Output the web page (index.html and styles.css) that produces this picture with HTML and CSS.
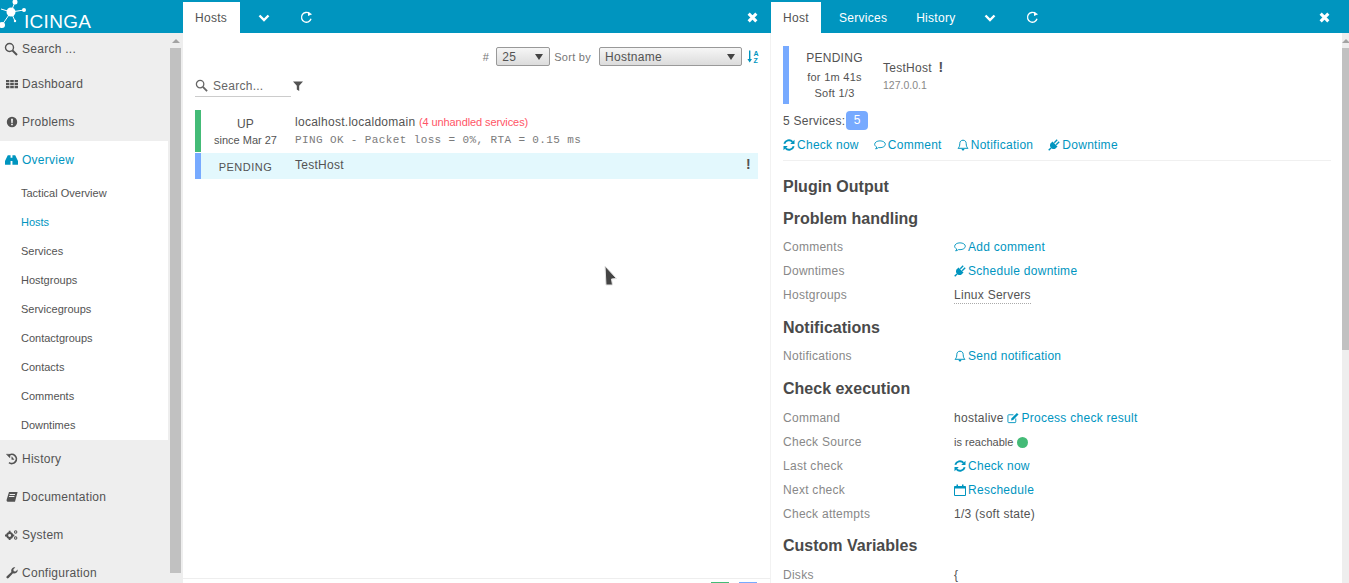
FILE: index.html
```html
<!DOCTYPE html>
<html lang="en">

<head>
    <meta charset="UTF-8">
    <title>Icinga Web</title>
    <link rel="stylesheet" href="styles.css">
</head>

<body>
    <svg class="sprites" width="0" height="0">
        <symbol id="i-search" viewBox="0 0 14 14"><circle cx="5.5" cy="5.5" r="4" fill="none" stroke="currentColor" stroke-width="1.4"/><path d="M8.5 8.5l4.5 4.5" stroke="currentColor" stroke-width="2" fill="none"/></symbol>
        <symbol id="i-grid" viewBox="0 0 12 10"><path d="M0 1h3.4v2.2H0zM4.2 1h3.6v2.2H4.2zM8.6 1H12v2.2H8.6zM0 4h3.4v2.2H0zM4.2 4h3.6v2.2H4.2zM8.6 4H12v2.2H8.6zM0 7h3.4v2.2H0zM4.2 7h3.6v2.2H4.2zM8.6 7H12v2.2H8.6z" fill="currentColor"/></symbol>
        <symbol id="i-alert" viewBox="0 0 12 12"><path fill-rule="evenodd" d="M6 .8a5.2 5.2 0 1 1 0 10.4A5.2 5.2 0 0 1 6 .8zM5 2.8l.3 4.2h1.4L7 2.8zM5.1 7.8v1.5h1.8V7.8z" fill="currentColor"/></symbol>
        <symbol id="i-binoculars" viewBox="0 0 14 12"><path d="M3 .8h3v10.400H.6c-.4 0-.6-.2-.6-.6V7zM11 .8H8v10.400h5.400c.4 0 .6-.2.6-.6V7zM6 3.500h2v3.500H6z" fill="currentColor"/></symbol>
        <symbol id="i-history" viewBox="0 0 12 12"><path d="M2.6 2.6A4.6 4.6 0 1 1 3 9.6" fill="none" stroke="currentColor" stroke-width="1.7"/><path d="M.4 1.2l3.8.2-.4 3.4zM5.800 3.600v2.800h2.400" fill="currentColor" stroke="currentColor" stroke-width=".5"/></symbol>
        <symbol id="i-book" viewBox="0 0 12 12"><path d="M3 1h8.600L9 10.800H1.800C.6 10.800.4 9.600.7 8.600zM3.700 3l-.2.900h5.400l.2-.900zM3.100 5l-.2.900h5.400l.2-.900z" fill="currentColor" fill-rule="evenodd"/></symbol>
        <symbol id="i-cogs" viewBox="0 0 14 12"><circle cx="5" cy="6.500" r="2.700" fill="none" stroke="currentColor" stroke-width="2.200"/><path d="M4 1.500h2v2H4zM4 9.500h2v2H4zM0 5.500h2v2H0zM8 5.500h2v2H8z" fill="currentColor"/><circle cx="11.500" cy="2.800" r="1.300" fill="none" stroke="currentColor" stroke-width="1.100"/><circle cx="11.500" cy="9.300" r="1.300" fill="none" stroke="currentColor" stroke-width="1.100"/></symbol>
        <symbol id="i-wrench" viewBox="0 0 12 12"><path d="M11.600 2.600A3.400 3.400 0 0 1 7 6.300L2.600 11a1.200 1.200 0 0 1-1.800-1.700L5.400 4.900A3.400 3.400 0 0 1 9.300.4L7.400 2.300l.3 1.900 1.900.3z" fill="currentColor"/></symbol>
        <symbol id="i-chevron" viewBox="0 0 12 8"><path d="M1.500 1.500L6 6l4.500-4.500" fill="none" stroke="currentColor" stroke-width="2.400"/></symbol>
        <symbol id="i-reload" viewBox="0 0 12 12"><path d="M10.200 7.200A4.500 4.500 0 1 1 8.800 2.400" fill="none" stroke="currentColor" stroke-width="1.200"/><path d="M7.400.6l3.800 2.400-3.800 1.600z" fill="currentColor"/></symbol>
        <symbol id="i-close" viewBox="0 0 10 10"><path d="M1.500 1.500l7 7M8.500 1.500l-7 7" stroke="currentColor" stroke-width="2.800" fill="none"/></symbol>
        <symbol id="i-filter" viewBox="0 0 10 10"><path d="M0 .5h10L6.200 4.800V10L3.800 8.400V4.800z" fill="currentColor"/></symbol>
        <symbol id="i-refresh" viewBox="0 0 12 12"><path d="M1.300 4.800A4.800 4.800 0 0 1 9.500 2.900M10.700 7.200A4.800 4.800 0 0 1 2.500 9.100" fill="none" stroke="currentColor" stroke-width="1.900"/><path d="M11.500.8v4.300H7.200zM.5 11.200V6.900h4.300z" fill="currentColor"/></symbol>
        <symbol id="i-comment" viewBox="0 0 13 11"><path d="M6.500 1C3.300 1 .7 2.600.7 4.700c0 1.200.9 2.300 2.200 3-.1.800-.6 1.500-1.200 2 1.300-.1 2.400-.7 3.200-1.400.5.100 1 .1 1.600.1 3.200 0 5.800-1.600 5.800-3.700S9.700 1 6.500 1z" fill="none" stroke="currentColor"/></symbol>
        <symbol id="i-bell" viewBox="0 0 12 12"><path d="M6 1.200c-2 0-3.200 1.500-3.200 3.300 0 2.500-.6 3.700-1.800 4.800h10C9.800 8.200 9.200 7 9.200 4.500 9.200 2.700 8 1.200 6 1.200z" fill="none" stroke="currentColor"/><path d="M4.600 10h2.800c0 .8-.6 1.500-1.400 1.500S4.600 10.800 4.600 10z" fill="currentColor"/></symbol>
        <symbol id="i-plug" viewBox="0 0 12 12"><path d="M4.500 2.500l5 5-2 2c-1.500 1-3.500.5-4.500-.5S1.500 6 2.500 4.500z" fill="currentColor"/><path d="M6.300 3.800L9.200.8M8.200 5.700l3-3M3 9l-2.300 2.300" stroke="currentColor" stroke-width="1.400" fill="none"/></symbol>
        <symbol id="i-edit" viewBox="0 0 13 12"><path d="M9.500 6.500v3.700c0 .5-.3.800-.8.800H1.800c-.5 0-.8-.3-.8-.8V3.300c0-.5.300-.8.800-.8h5.200" fill="none" stroke="currentColor"/><path d="M10.700.5l1.800 1.800-5.800 5.800-2.300.5.500-2.300z" fill="currentColor"/></symbol>
        <symbol id="i-calendar" viewBox="0 0 12 12"><path d="M.5 2.500h11v9H.5z" fill="none" stroke="currentColor"/><path d="M.5 2.500h11v2H.5zM2.500.5h1.500v2.500H2.500zM8 .5h1.500v2.500H8z" fill="currentColor"/></symbol>
    </svg>

    <div class="app">
        <aside class="sidebar">
            <div class="logo">
                <svg class="logo-mark" width="30" height="33" viewBox="0 0 30 33">
                    <path d="M11 12L15 2M11 12L24 10M11 12L1 9M11 12L15 21M11 12L2 25" stroke="#fff" stroke-width="1" fill="none"/>
                    <circle cx="11" cy="12" r="4.500" fill="#fff"/>
                    <circle cx="15" cy="2" r="2.500" fill="#fff"/>
                    <circle cx="24" cy="10" r="2" fill="#fff"/>
                    <circle cx="15" cy="21" r="1.200" fill="#fff"/>
                    <circle cx="2" cy="25" r="3" fill="#fff"/>
                </svg>
                <span class="logo-text">ICINGA</span>
            </div>
            <div class="side-body">
                <nav class="side-nav">
                    <div class="nav-search"><svg class="nav-icon"><use href="#i-search"/></svg>Search ...</div>
                    <a class="nav-item"><svg class="nav-icon small"><use href="#i-grid"/></svg>Dashboard</a>
                    <a class="nav-item"><svg class="nav-icon small"><use href="#i-alert"/></svg>Problems</a>
                    <div class="nav-active">
                        <a class="nav-item current"><svg class="nav-icon"><use href="#i-binoculars"/></svg>Overview</a>
                        <a class="sub-item">Tactical Overview</a>
                        <a class="sub-item current">Hosts</a>
                        <a class="sub-item">Services</a>
                        <a class="sub-item">Hostgroups</a>
                        <a class="sub-item">Servicegroups</a>
                        <a class="sub-item">Contactgroups</a>
                        <a class="sub-item">Contacts</a>
                        <a class="sub-item">Comments</a>
                        <a class="sub-item">Downtimes</a>
                    </div>
                    <a class="nav-item"><svg class="nav-icon small"><use href="#i-history"/></svg>History</a>
                    <a class="nav-item"><svg class="nav-icon small"><use href="#i-book"/></svg>Documentation</a>
                    <a class="nav-item"><svg class="nav-icon"><use href="#i-cogs"/></svg>System</a>
                    <a class="nav-item"><svg class="nav-icon small"><use href="#i-wrench"/></svg>Configuration</a>
                </nav>
                <div class="scrollbar side-scroll">
                    <div class="arrow-up"></div>
                    <div class="thumb"></div>
                </div>
            </div>
        </aside>

        <section class="col col-left">
            <div class="tabs">
                <a class="tab active">Hosts</a>
                <a class="tab tab-icon"><svg class="icon chevron"><use href="#i-chevron"/></svg></a>
                <a class="tab tab-icon"><svg class="icon reload"><use href="#i-reload"/></svg></a>
                <svg class="icon close"><use href="#i-close"/></svg>
            </div>
            <div class="list-content">
                <div class="list-controls">
                    <span class="ctl-label">#</span>
                    <div class="fake-select limit-select">25</div>
                    <span class="ctl-label">Sort by</span>
                    <div class="fake-select sort-select">Hostname</div>
                    <svg class="sort-icon" viewBox="0 0 12 14">
                        <path d="M2 1h1.400v8.500H5L2.700 13 .4 9.500H2z" fill="currentColor"/>
                        <text x="6.500" y="6" class="sort-letter">A</text>
                        <text x="6.500" y="13" class="sort-letter">Z</text>
                    </svg>
                </div>
                <div class="filter-row">
                    <div class="list-search"><svg class="icon search-icon"><use href="#i-search"/></svg>Search...</div>
                    <svg class="icon filter-icon"><use href="#i-filter"/></svg>
                </div>
                <div class="host-row">
                    <div class="state state-up">
                        <span class="state-name">UP</span>
                        <span class="state-since">since Mar 27</span>
                    </div>
                    <div class="host-info">
                        <div>localhost.localdomain <span class="unhandled">(4 unhandled services)</span></div>
                        <div class="plugin-text">PING OK - Packet loss = 0%, RTA = 0.15 ms</div>
                    </div>
                </div>
                <div class="host-row selected">
                    <div class="state state-pending">
                        <span class="state-name">PENDING</span>
                    </div>
                    <div class="host-info">TestHost</div>
                    <span class="bang">!</span>
                </div>
            </div>
            <div class="list-footer">
                <span class="foot-pill green"></span>
                <span class="foot-pill blue"></span>
            </div>
        </section>

        <section class="col col-right">
            <div class="tabs">
                <a class="tab active">Host</a>
                <a class="tab tab-services">Services</a>
                <a class="tab tab-history">History</a>
                <a class="tab tab-icon"><svg class="icon chevron"><use href="#i-chevron"/></svg></a>
                <a class="tab tab-icon"><svg class="icon reload"><use href="#i-reload"/></svg></a>
                <svg class="icon close"><use href="#i-close"/></svg>
            </div>
            <div class="detail-body">
                <div class="detail">
                    <div class="host-head">
                        <div class="head-state">
                            <div class="head-name">PENDING</div>
                            <div>for 1m 41s</div>
                            <div>Soft 1/3</div>
                        </div>
                        <div class="head-info">
                            <div class="head-host">TestHost <span class="bang">!</span></div>
                            <div class="head-ip">127.0.0.1</div>
                        </div>
                    </div>
                    <div class="services-line">5 Services: <span class="badge">5</span></div>
                    <div class="actions">
                        <a><svg class="icon link-icon"><use href="#i-refresh"/></svg>Check now</a>
                        <a><svg class="icon link-icon"><use href="#i-comment"/></svg>Comment</a>
                        <a><svg class="icon link-icon"><use href="#i-bell"/></svg>Notification</a>
                        <a><svg class="icon link-icon"><use href="#i-plug"/></svg>Downtime</a>
                    </div>

                    <h2 class="first">Plugin Output</h2>
                    <h2>Problem handling</h2>
                    <div class="kv"><span>Comments</span><a><svg class="icon link-icon"><use href="#i-comment"/></svg>Add comment</a></div>
                    <div class="kv"><span>Downtimes</span><a><svg class="icon link-icon"><use href="#i-plug"/></svg>Schedule downtime</a></div>
                    <div class="kv"><span>Hostgroups</span><div><span class="dotted">Linux Servers</span></div></div>

                    <h2>Notifications</h2>
                    <div class="kv"><span>Notifications</span><a><svg class="icon link-icon"><use href="#i-bell"/></svg>Send notification</a></div>

                    <h2 class="wide-bottom">Check execution</h2>
                    <div class="kv"><span>Command</span><div>hostalive <a><svg class="icon link-icon"><use href="#i-edit"/></svg>Process check result</a></div></div>
                    <div class="kv"><span>Check Source</span><div class="reachable">is reachable <i class="dot"></i></div></div>
                    <div class="kv"><span>Last check</span><a><svg class="icon link-icon"><use href="#i-refresh"/></svg>Check now</a></div>
                    <div class="kv"><span>Next check</span><a><svg class="icon link-icon"><use href="#i-calendar"/></svg>Reschedule</a></div>
                    <div class="kv"><span>Check attempts</span><div>1/3 (soft state)</div></div>

                    <h2 class="wide-bottom close-top">Custom Variables</h2>
                    <div class="kv"><span>Disks</span><div>{</div></div>
                </div>
                <div class="scrollbar main-scroll">
                    <div class="arrow-up"></div>
                    <div class="thumb"></div>
                </div>
            </div>
        </section>
    </div>

    <svg class="cursor" width="16" height="24" viewBox="0 0 16 24">
        <path d="M2 2l11.500 12.500-5 .5 1 6H3z" fill="#444" stroke="#e4e4e4" stroke-width="1"/>
    </svg>
</body>

</html>
```

FILE: styles.css
```css
* {
    box-sizing: border-box;
}

html,
body {
    margin: 0;
    padding: 0;
    height: 100%;
    overflow: hidden;
}

body {
    font-family: "Liberation Sans", Arial, sans-serif;
    font-size: 12px;
    letter-spacing: 0.27px;
    color: #535353;
    background-color: #fff;
    position: relative;
}

.sprites {
    position: absolute;
}

.app {
    display: flex;
    height: 583px;
}

.icon {
    width: 12px;
    height: 12px;
    flex: none;
}

/* sidebar */
.sidebar {
    width: 183px;
    flex: none;
    display: flex;
    flex-direction: column;
    background-color: #eee;
}

.logo {
    height: 33px;
    flex: none;
    background-color: #0095bf;
    display: flex;
}

.logo-text {
    color: #fff;
    font-size: 19px;
    line-height: 21px;
    margin-top: 11px;
    margin-left: -6px;
    letter-spacing: 0.3px;
}

.side-body {
    flex: 1;
    display: flex;
    min-height: 0;
}

.side-nav {
    width: 168px;
    flex: none;
}

.nav-search,
.nav-item {
    display: flex;
    align-items: center;
    color: #535353;
}

.nav-search {
    height: 32px;
    padding-left: 4px;
}

.nav-item {
    height: 38px;
    padding-left: 5px;
}

.nav-icon {
    width: 14px;
    height: 14px;
    margin-right: 4px;
    flex: none;
}

.nav-item .nav-icon {
    width: 13px;
    margin-right: 4px;
}

.nav-icon.small,
.nav-item .nav-icon.small {
    width: 12px;
    height: 12px;
    margin-left: 1px;
    margin-right: 4px;
}

.nav-active {
    background-color: #fff;
}

.sub-item {
    display: flex;
    align-items: center;
    height: 29px;
    padding: 0 0 2px 21px;
    font-size: 11px;
    letter-spacing: 0;
    color: #535353;
}

.nav-item.current,
.sub-item.current {
    color: #0095bf;
}

.scrollbar {
    display: flex;
    flex-direction: column;
}

.side-scroll {
    width: 15px;
    padding: 0 2px;
    background-color: #eee;
}

.arrow-up {
    height: 15px;
    flex: none;
    display: flex;
    justify-content: center;
    align-items: center;
}

.arrow-up::before {
    content: "";
    border-left: 4px solid transparent;
    border-right: 4px solid transparent;
    border-bottom: 4px solid #a3a3a3;
}

.thumb {
    background-color: #c1c1c1;
}

.side-scroll .thumb {
    height: 525px;
    width: 11px;
}

/* columns */
.col {
    display: flex;
    flex-direction: column;
    min-width: 0;
}

.col-left {
    width: 588px;
    flex: none;
}

.col-right {
    flex: 1;
}

.tabs {
    height: 33px;
    flex: none;
    background-color: #0095bf;
    display: flex;
    align-items: flex-end;
    padding-top: 2px;
    color: #fff;
}

.tab {
    height: 31px;
    padding: 0 12px;
    display: flex;
    align-items: center;
    color: #fff;
}

.tab.active {
    background-color: #fff;
    color: #535353;
}

.col-left .tab.active {
    width: 57px;
}

.col-right .tab {
    padding: 0 15px;
}

.col-right .tab-services {
    margin-left: 3px;
}

.col-right .tab-history {
    margin-left: -1px;
}

.col-right .tab.active {
    padding: 0 12px;
    width: 50px;
}

.tab-icon {
    width: 38px;
    justify-content: center;
}

.col-left .tab.tab-icon {
    padding: 0;
    width: 36px;
    margin-right: 6px;
}

.col-left .tab-icon:nth-child(2) {
    margin-left: 6px;
}

.col-right .tab.tab-icon {
    padding: 0;
    margin-right: 4px;
}

.col-right .tab-history + .tab-icon {
    margin-left: 1px;
}

.chevron {
    width: 12px;
    height: 8px;
}

.reload {
    width: 13px;
    height: 13px;
}

.close {
    margin-left: auto;
    margin-right: 13px;
    margin-bottom: 10px;
    width: 11px;
    height: 11px;
}

.col-right .close {
    margin-right: 19px;
}

/* host list */
.list-content {
    flex: 1;
    padding: 0 12px;
    border-right: 1px solid #f2f2f2;
}

.list-controls {
    display: flex;
    justify-content: flex-end;
    align-items: center;
    height: 19px;
    margin: 14px -1px 0 0;
}

.ctl-label {
    font-size: 11px;
    color: #777;
}

.fake-select {
    height: 19px;
    border: 1px solid #999;
    border-radius: 2px;
    background: linear-gradient(#f6f6f6, #dcdcdc);
    padding-left: 5px;
    line-height: 18px;
    position: relative;
}

.fake-select::after {
    content: "";
    position: absolute;
    right: 6px;
    top: 6px;
    border-left: 4px solid transparent;
    border-right: 4px solid transparent;
    border-top: 6px solid #444;
}

.limit-select {
    width: 54px;
    margin: 0 4px 0 7px;
}

.sort-select {
    width: 143px;
    margin-left: 8px;
}

.sort-icon {
    width: 12px;
    height: 15px;
    margin-left: 5px;
    color: #0095bf;
}

.sort-letter {
    font: bold 7px "Liberation Sans", sans-serif;
    letter-spacing: 0;
    fill: currentColor;
}

.filter-row {
    display: flex;
    align-items: center;
    margin-top: 8px;
}

.list-search {
    width: 96px;
    height: 23px;
    padding-top: 1px;
    border-bottom: 1px solid #ccc;
    display: flex;
    align-items: center;
    gap: 5px;
    color: #666;
}

.search-icon {
    width: 13px;
    height: 13px;
}

.filter-icon {
    margin-left: 2px;
    width: 10px;
    height: 10px;
}

.host-row {
    display: flex;
    align-items: flex-start;
    margin-top: 13px;
    height: 42px;
    position: relative;
}

.host-row.selected {
    margin-top: 1px;
    height: 26px;
    background-color: #e3f8fd;
}

.state {
    width: 88px;
    flex: none;
    height: 100%;
    border-left: 6px solid #44bb77;
    padding: 7px 0 0 7px;
    display: flex;
    flex-direction: column;
    align-items: center;
}

.state-pending {
    border-left-color: #77aaff;
}

.state-name {
    line-height: 14px;
}

.state-pending .state-name {
    font-size: 11px;
    letter-spacing: 0.5px;
}

.state-since {
    font-size: 11px;
    letter-spacing: 0;
    line-height: 18px;
}

.host-info {
    margin-left: 12px;
    padding-top: 5px;
    white-space: nowrap;
}

.unhandled {
    color: #ff5566;
    font-size: 11px;
    letter-spacing: -0.1px;
}

.plugin-text {
    font-family: "Liberation Mono", monospace;
    font-size: 11px;
    letter-spacing: 0.38px;
    color: #7b7b7b;
    margin-top: 5px;
}

.bang {
    font-size: 14px;
    font-weight: bold;
    color: #535353;
}

.head-host .bang {
    margin-left: 3px;
}

.host-row .bang {
    position: absolute;
    right: 7px;
    top: 3px;
}

.list-footer {
    height: 5px;
    flex: none;
    border-top: 1px solid #eee;
    border-right: 1px solid #f2f2f2;
    display: flex;
    justify-content: flex-end;
    gap: 10px;
    padding: 3px 13px 0 0;
}

.foot-pill {
    width: 18px;
    height: 1px;
    display: block;
}

.foot-pill.green {
    background-color: #44bb77;
}

.foot-pill.blue {
    background-color: #77aaff;
}

/* host detail */
.detail-body {
    flex: 1;
    display: flex;
    min-height: 0;
}

.detail {
    flex: 1;
    padding: 13px 11px 0 12px;
    overflow: hidden;
    min-width: 0;
}

.main-scroll {
    width: 7px;
    flex: none;
    background-color: #eee;
}

.main-scroll .arrow-up {
    justify-content: flex-start;
}

.main-scroll .thumb {
    height: 302px;
}

.host-head {
    display: flex;
    align-items: center;
    height: 58px;
    border-left: 6px solid #77aaff;
}

.head-state {
    width: 91px;
    text-align: center;
    font-size: 11px;
    line-height: 16px;
}

.head-name {
    font-size: 12px;
    line-height: 18px;
    margin-bottom: 2px;
}

.head-info {
    margin-left: 3px;
}

.head-host {
    line-height: 18px;
}

.head-ip {
    font-size: 10.5px;
    letter-spacing: 0;
    color: #888;
    line-height: 16px;
}

.services-line {
    display: flex;
    align-items: center;
    gap: 1px;
    height: 19px;
    margin-top: 7px;
}

.badge {
    width: 22px;
    height: 19px;
    border-radius: 4px;
    background-color: #77aaff;
    color: #fff;
    text-align: center;
    line-height: 19px;
}

.actions {
    display: flex;
    gap: 15px;
    height: 31px;
    align-items: center;
    border-bottom: 1px solid #f0f0f0;
}

a {
    color: #0095bf;
}

.link-icon {
    width: 12px;
    height: 12px;
    margin-right: 2px;
    vertical-align: -2px;
}

h2 {
    font-size: 16px;
    letter-spacing: 0;
    color: #4a4a4a;
    margin: 0;
    padding: 12px 0 7px 0;
    line-height: 18px;
}

h2.first {
    padding: 17px 0 2px 0;
}

h2.wide-bottom {
    padding-bottom: 8px;
}

h2.close-top {
    padding-top: 11px;
}

.kv {
    display: flex;
    height: 24px;
    align-items: center;
}

.kv > span {
    width: 171px;
    flex: none;
    color: #888;
}

.dotted {
    border-bottom: 1px dotted #aaa;
    padding-bottom: 1px;
}

.reachable {
    font-size: 11px;
    letter-spacing: 0;
    display: flex;
    align-items: center;
    gap: 4px;
}

.dot {
    width: 11px;
    height: 11px;
    border-radius: 50%;
    background-color: #44bb77;
    display: block;
}

.cursor {
    position: absolute;
    left: 603px;
    top: 264px;
}
```
